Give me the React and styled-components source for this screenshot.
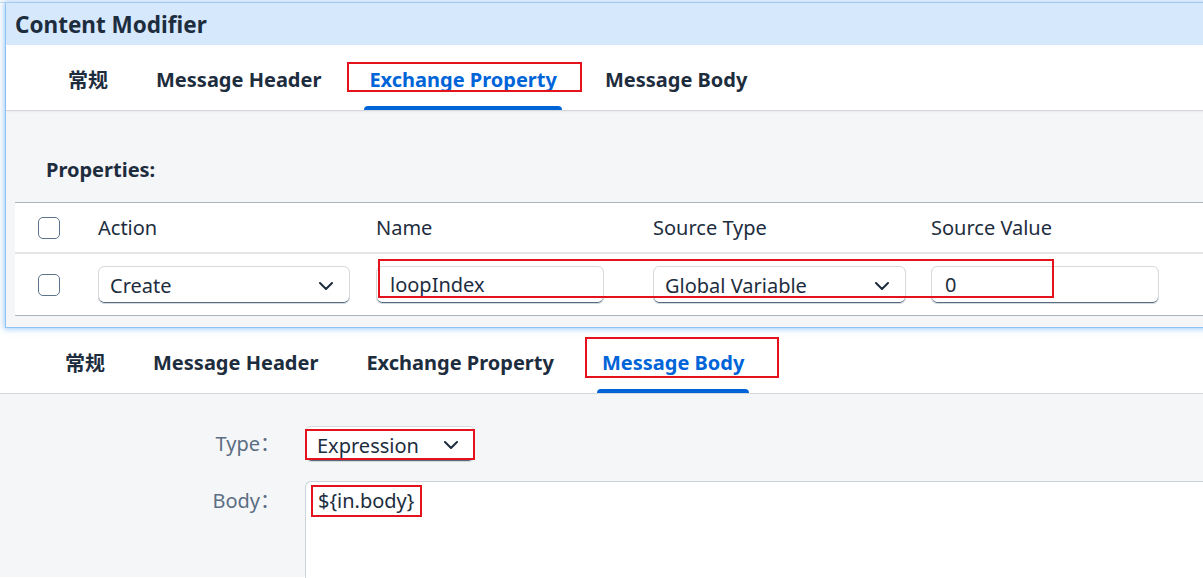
import React from "react";
import styled, { createGlobalStyle, css } from "styled-components";

const GlobalStyle = createGlobalStyle`
  * { box-sizing: border-box; }
  body {
    margin: 0;
    font-family: "Noto Sans", "Noto Sans CJK SC", sans-serif;
    color: #1d2d3e;
    background: #ffffff;
  }
`;

const RED = "#e3121c";
const BLUE = "#0064d9";

const Chevron = () => (
  <svg width="14" height="8" viewBox="0 0 14 8" fill="none">
    <polyline
      points="1,1 7,7 13,1"
      stroke="#1d2d3e"
      strokeWidth="2"
      strokeLinecap="round"
      strokeLinejoin="round"
    />
  </svg>
);

const App = () => {
  return (
    <Page>
      <GlobalStyle />
      <Backdrop />
      <Dialog>
        <DialogTitle>Content Modifier</DialogTitle>
        <TabBar $inset={57}>
          <Tab>常规</Tab>
          <Tab>Message Header</Tab>
          <Tab $active>
            Exchange Property
            <Mark $t={17} $b={18} $l={-17} $r={-20} />
          </Tab>
          <Tab>Message Body</Tab>
        </TabBar>
        <DialogBody>
          <SectionTitle>Properties:</SectionTitle>
          <Table>
            <HeadRow>
              <Cell>
                <Checkbox />
              </Cell>
              <HeadCell>Action</HeadCell>
              <HeadCell>Name</HeadCell>
              <HeadCell>Source Type</HeadCell>
              <HeadCell>Source Value</HeadCell>
            </HeadRow>
            <BodyRow>
              <Cell>
                <Checkbox />
              </Cell>
              <Cell>
                <Select $w={252}>
                  Create
                  <Chevron />
                </Select>
              </Cell>
              <Cell>
                <Field $w={228}>loopIndex</Field>
              </Cell>
              <Cell>
                <Select $w={253}>
                  Global Variable
                  <Chevron />
                </Select>
              </Cell>
              <Cell>
                <Field $w={228}>0</Field>
              </Cell>
              <RowMark />
            </BodyRow>
          </Table>
        </DialogBody>
      </Dialog>

      <TabBar $inset={60}>
        <Tab>常规</Tab>
        <Tab>Message Header</Tab>
        <Tab>Exchange Property</Tab>
        <Tab $active>
          Message Body
          <Mark $t={9} $b={15} $l={-12} $r={-30} />
        </Tab>
      </TabBar>
      <Form>
        <FormLabel>Type：</FormLabel>
        <Select $w={170} $h={36}>
          Expression
          <Chevron />
          <Mark $t={2} $b={1} $l={-1} $r={-1} />
        </Select>
        <FormLabel $top>Body：</FormLabel>
        <TextArea>
          <Marked>{"${in.body}"}</Marked>
        </TextArea>
      </Form>
    </Page>
  );
};

const Page = styled.div`
  position: relative;
  width: 1203px;
  height: 578px;
  overflow: hidden;
  background: #ffffff;
`;

const Backdrop = styled.div`
  height: 3px;
  background: #f7f9fb;
  border-bottom: 1px solid #c9dcef;
`;

const Dialog = styled.div`
  position: relative;
  z-index: 2;
  margin-left: 5px;
  width: 1240px;
  border: 1px solid #8ec3f7;
  border-top: none;
  box-shadow: 0 0 6px 1px rgba(80, 160, 245, 0.55);
  background: #f5f6f7;
`;

const DialogTitle = styled.div`
  height: 42px;
  padding-left: 9px;
  display: flex;
  align-items: center;
  background: #d6e9fc;
  font-size: 22.5px;
  font-weight: 700;
  color: #1d2d3e;
`;

const TabBar = styled.div`
  display: flex;
  align-items: stretch;
  gap: 38px;
  height: 66px;
  padding-left: ${(p) => p.$inset}px;
  background: #ffffff;
  border-bottom: 1px solid #d5d8dc;
  box-shadow: 0 1px 2px rgba(0, 0, 0, 0.06);
`;

const Tab = styled.div`
  position: relative;
  display: flex;
  align-items: center;
  padding: 3px 5px 0;
  font-size: 20px;
  font-weight: 700;
  color: #1d2d3e;
  white-space: nowrap;

  ${(p) =>
    p.$active &&
    css`
      color: ${BLUE};
      &::after {
        content: "";
        position: absolute;
        left: 0;
        right: 0;
        bottom: 0;
        height: 4px;
        border-radius: 4px 4px 0 0;
        background: ${BLUE};
      }
    `}
`;

const Mark = styled.span`
  position: absolute;
  top: ${(p) => p.$t}px;
  bottom: ${(p) => p.$b}px;
  left: ${(p) => p.$l}px;
  right: ${(p) => p.$r}px;
  border: 2px solid ${RED};
  pointer-events: none;
`;

const DialogBody = styled.div`
  padding: 47px 0 11px 9px;
`;

const SectionTitle = styled.div`
  padding-left: 31px;
  margin-bottom: 20px;
  line-height: 24px;
  font-size: 20px;
  font-weight: 700;
  color: #1d2d3e;
`;

const Table = styled.div`
  background: #ffffff;
  border-top: 1px solid #a9b4be;
  border-bottom: 1px solid #a9b4be;
`;

const rowGrid = css`
  display: grid;
  grid-template-columns: 83px 278px 277px 278px 1fr;
  align-items: center;
`;

const HeadRow = styled.div`
  ${rowGrid};
  height: 51px;
  border-bottom: 2px solid #e5e5e5;
`;

const BodyRow = styled.div`
  ${rowGrid};
  position: relative;
  height: 61px;
`;

const Cell = styled.div`
  display: flex;
  align-items: center;
`;

const HeadCell = styled.div`
  font-size: 20px;
  color: #1d2d3e;
`;

const Checkbox = styled.span`
  display: block;
  width: 22px;
  height: 22px;
  margin-left: 23px;
  border: 1px solid #5b738b;
  border-radius: 5px;
  background: #ffffff;
`;

const fieldBase = css`
  display: flex;
  align-items: center;
  width: ${(p) => p.$w}px;
  height: ${(p) => p.$h || 38}px;
  background: #ffffff;
  border: 1px solid #d5dadd;
  border-radius: 6px;
  box-shadow: inset 0 -1px 0 #556b82;
  font-size: 20px;
  color: #1d2d3e;
`;

const Select = styled.div`
  ${fieldBase};
  position: relative;
  justify-content: space-between;
  padding: 2px 16px 0 11px;
`;

const Field = styled.div`
  ${fieldBase};
  padding: 0 13px;
`;

const RowMark = styled.span`
  position: absolute;
  left: 363px;
  top: 5px;
  width: 676px;
  height: 39px;
  border: 2px solid ${RED};
  pointer-events: none;
`;

const Form = styled.div`
  display: grid;
  grid-template-columns: 280px 1fr;
  column-gap: 25px;
  row-gap: 19px;
  align-items: start;
  padding-top: 32px;
  height: 183px;
  background: #f5f6f7;
`;

const FormLabel = styled.div`
  text-align: right;
  line-height: 36px;
  font-size: 20px;
  color: #5b6e83;
  ${(p) => p.$top && "margin-top: 2px;"}
`;

const TextArea = styled.div`
  height: 140px;
  margin-right: -20px;
  padding: 3px 0 0 5px;
  background: #ffffff;
  border: 1px solid #cdd3da;
  border-right: none;
  border-radius: 6px 0 0 0;
`;

const Marked = styled.span`
  display: inline-block;
  padding: 0 6px 0 5px;
  line-height: 28px;
  border: 2px solid ${RED};
  font-size: 20px;
  color: #1d2d3e;
`;

export default App;
